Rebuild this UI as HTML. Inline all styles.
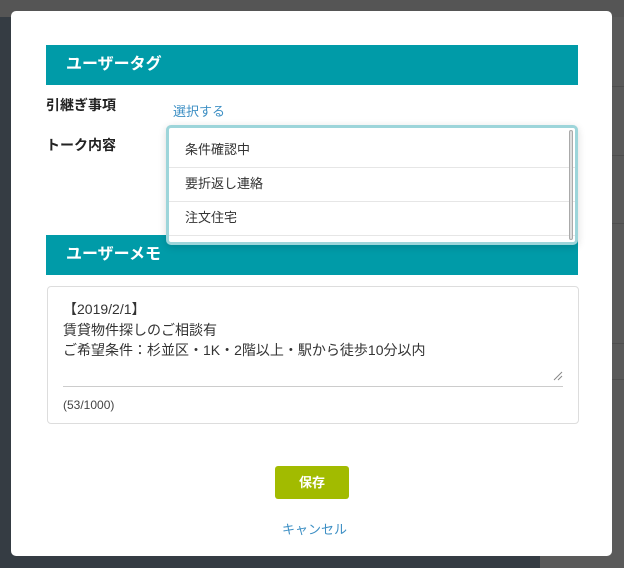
<!DOCTYPE html>
<html><head><meta charset="utf-8"><style>
*{margin:0;padding:0;box-sizing:border-box}
body{width:624px;height:568px;overflow:hidden;position:relative;background:#353c43;font-family:"Liberation Sans","Noto Sans CJK JP",sans-serif}
.top{position:absolute;left:0;top:0;width:624px;height:17px;background:#555}
.rbg{position:absolute;left:540px;top:17px;width:84px;height:551px;background:#5a5a5a}
.rbg div{position:absolute;left:0;right:0;border-top:1px solid #4e4e4e}
.modal{position:absolute;left:11px;top:11px;width:601px;height:545px;background:#fff;border-radius:5px}
.bar{position:absolute;left:35px;width:532px;height:40px;background:#009ba8;color:#fff;font-weight:bold;font-size:16px;line-height:40px;padding-left:20px}
.lbl{position:absolute;left:35px;font-size:14px;font-weight:bold;color:#222}
.link{color:#3d8fc4;font-size:13px;position:absolute}
.dd{position:absolute;left:155px;top:114px;width:412px;height:120px;border:3px solid #9dd5da;border-radius:5px;background:#fff;box-shadow:0 2px 8px rgba(0,0,0,.15);overflow:hidden;padding-top:6px}
.dd .it{height:34px;border-bottom:1px solid #e6e6e6;font-size:13px;color:#333;line-height:32px;padding-left:16px}
.sb{position:absolute;right:2px;top:2px;width:4px;height:110px;background:#ddd;border:1px solid #aaa;border-radius:2px}
.memo{position:absolute;left:36px;top:275px;width:532px;height:138px;border:1px solid #ddd;border-radius:4px}
.txt{position:absolute;left:15px;top:12px;font-size:14px;line-height:20.5px;color:#333}
.ul{position:absolute;left:15px;top:99px;width:500px;border-top:1px solid #ccc}
.cnt{position:absolute;left:15px;top:111px;font-size:12px;color:#444}
.btn{position:absolute;left:264px;top:455px;width:74px;height:33px;background:#a2bb00;border-radius:3px;color:#fff;font-weight:bold;font-size:13px;text-align:center;line-height:33px}
</style></head><body>
<div class="top"></div>
<div class="rbg"><div style="top:69px"></div><div style="top:138px"></div><div style="top:206px"></div><div style="top:326px"></div><div style="top:362px"></div></div>
<div class="modal">
<div class="bar" style="top:34px">ユーザータグ</div>
<div class="lbl" style="top:84px">引継ぎ事項</div>
<div class="link" style="left:162px;top:90px">選択する</div>
<div class="lbl" style="top:124px">トーク内容</div>
<div class="bar" style="top:224px">ユーザーメモ</div>
<div class="dd"><div class="it">条件確認中</div><div class="it">要折返し連絡</div><div class="it">注文住宅</div><div class="sb"></div></div>
<div class="memo">
<div class="txt">【2019/2/1】<br>賃貸物件探しのご相談有<br>ご希望条件：杉並区・1K・2階以上・駅から徒歩10分以内</div>
<svg style="position:absolute;left:505px;top:84px" width="10" height="10"><path d="M1 9L9 1M5 9L9 5" stroke="#888" stroke-width="1"/></svg>
<div class="ul"></div>
<div class="cnt">(53/1000)</div>
</div>
<div class="btn">保存</div>
<div class="link" style="left:271px;top:508px">キャンセル</div>
</div>
</body></html>
